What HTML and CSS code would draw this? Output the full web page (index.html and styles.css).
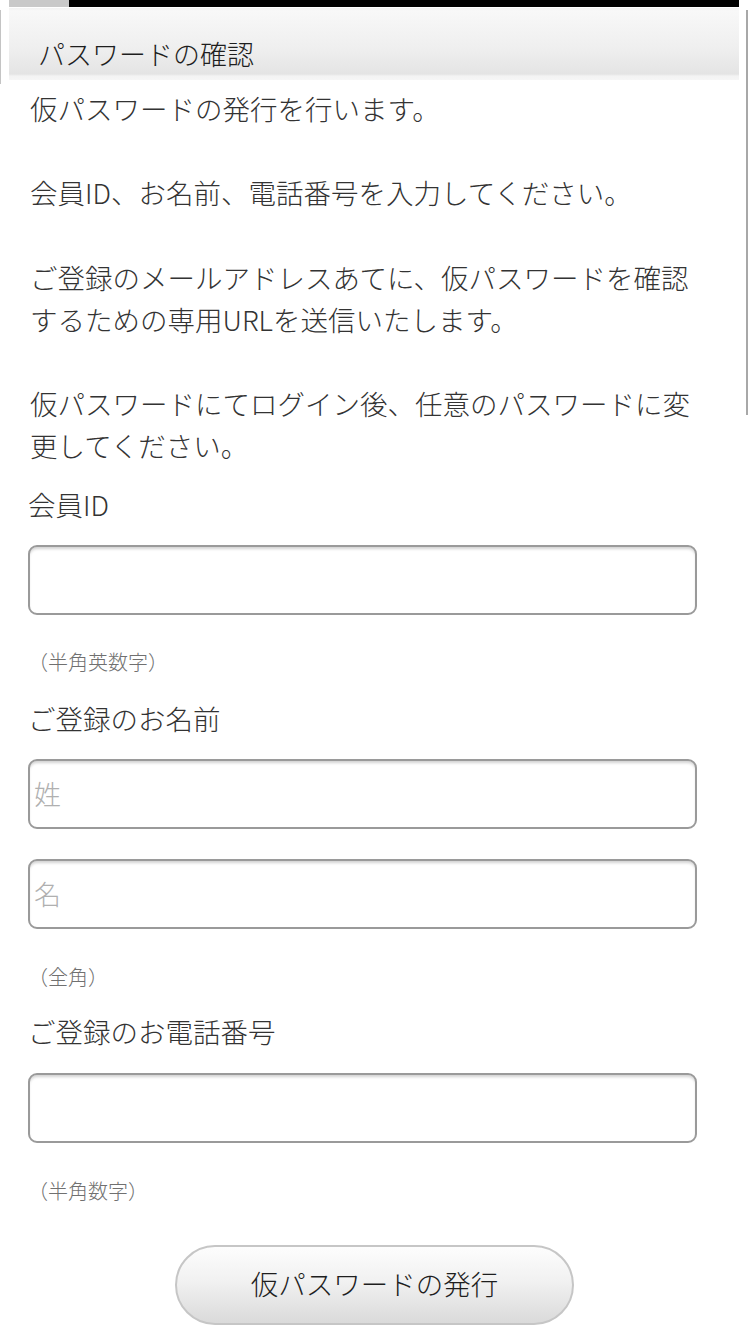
FILE: index.html
```html
<!DOCTYPE html>
<html lang="ja">
<head>
<meta charset="utf-8">
<title>パスワードの確認</title>
<link rel="stylesheet" href="styles.css">
</head>
<body>
<div class="scroll-right"></div>
<div class="scroll-left"></div>
<div class="topbar"><div class="topbar-gray"></div><div class="topbar-black"></div></div>
<header class="header"><h1 class="header-title">パスワードの確認</h1></header>
<main class="content">
  <div class="intro">
    <p>仮パスワードの発行を行います。</p>
    <p>会員ID、お名前、電話番号を入力してください。</p>
    <p>ご登録のメールアドレスあてに、仮パスワードを確認するための専用URLを送信いたします。</p>
    <p class="last">仮パスワードにてログイン後、任意のパスワードに変更してください。</p>
  </div>
  <div class="label label-first">会員ID</div>
  <input class="input input-after-label" type="text">
  <div class="note">（半角英数字）</div>
  <div class="label label-after-note">ご登録のお名前</div>
  <input class="input input-after-label" type="text" placeholder="姓">
  <input class="input input-after-input" type="text" placeholder="名">
  <div class="note">（全角）</div>
  <div class="label label-after-note2">ご登録のお電話番号</div>
  <input class="input input-after-label2" type="text">
  <div class="note">（半角数字）</div>
  <div class="button-row"><button class="submit" type="button">仮パスワードの発行</button></div>
</main>
</body>
</html>
```

FILE: styles.css
```css
* { box-sizing: border-box; }
html, body { margin: 0; padding: 0; background: #fff; }
body {
  font-family: "Noto Sans CJK JP", "Noto Sans", sans-serif;
  font-weight: 300;
  color: #333;
  width: 750px;
  min-height: 1334px;
  position: relative;
  overflow: hidden;
}
.scroll-right {
  position: absolute;
  right: 2px;
  top: 10px;
  width: 2px;
  height: 405px;
  background: #a8a8a8;
}
.scroll-left {
  position: absolute;
  left: 0;
  top: 10px;
  width: 1px;
  height: 74px;
  background: #c4c4c4;
}
.topbar {
  display: flex;
  height: 7px;
  margin: 0 11px 0 9px;
}
.topbar-gray { width: 60px; background: #c9c9c9; }
.topbar-black { flex: 1; background: #000; }
.header {
  margin: 1px 11px 0 9px;
  height: 72px;
  background: linear-gradient(to bottom, #f3f3f3 0px, #f8f8f8 3px, #efefef 40px, #e4e4e4 66px, #f3f3f3 68px, #f6f6f6 72px);
  display: flex;
  align-items: center;
  padding: 18px 0 0 29px;
}
.header-title {
  margin: 0;
  font-size: 27px;
  font-weight: 300;
  color: #1e1e1e;
  line-height: 1;
}
.content {
  padding: 7px 53px 0 28px;
}
.intro p {
  margin: 0 0 42px;
  font-size: 27.5px;
  line-height: 42.3px;
  padding-left: 2px;
  color: #333;
}
.intro p.last { margin-bottom: 0; }
.label {
  font-size: 27.5px;
  line-height: 42px;
  color: #333;
}
.label-first { margin-top: 16px; }
.label-after-note { margin-top: 20px; }
.label-after-note2 { margin-top: 18px; }
.input {
  display: block;
  width: 669px;
  height: 70px;
  border: 2px solid #9a9a9a;
  border-radius: 9px;
  background: #fff;
  box-shadow: inset 0 3px 3px -1px rgba(0,0,0,0.18);
  font-family: "Noto Sans CJK JP", sans-serif;
  font-weight: 300;
  font-size: 27px;
  padding: 0 4px;
  color: #333;
  outline: none;
}
.input::placeholder { color: #b0b0b0; }
.input-after-label { margin-top: 20px; }
.input-after-label2 { margin-top: 21px; }
.input-after-input { margin-top: 30px; }
.note {
  margin-top: 32px;
  font-size: 20px;
  line-height: 30px;
  color: #707070;
}
.input-after-input + .note { margin-top: 33px; }
.input-after-label2 + .note { margin-top: 33px; }
.button-row {
  display: flex;
  justify-content: flex-start;
  padding-left: 147px;
  margin-top: 39px;
}
.submit {
  width: 399px;
  height: 80px;
  border: 2px solid #c6c6c6;
  border-radius: 40px;
  background: linear-gradient(to bottom, #fdfdfd 0%, #f1f1f1 45%, #dadada 100%);
  font-family: "Noto Sans CJK JP", sans-serif;
  font-weight: 300;
  font-size: 27.5px;
  color: #1e1e1e;
  padding: 0 0 4px;
}
```
